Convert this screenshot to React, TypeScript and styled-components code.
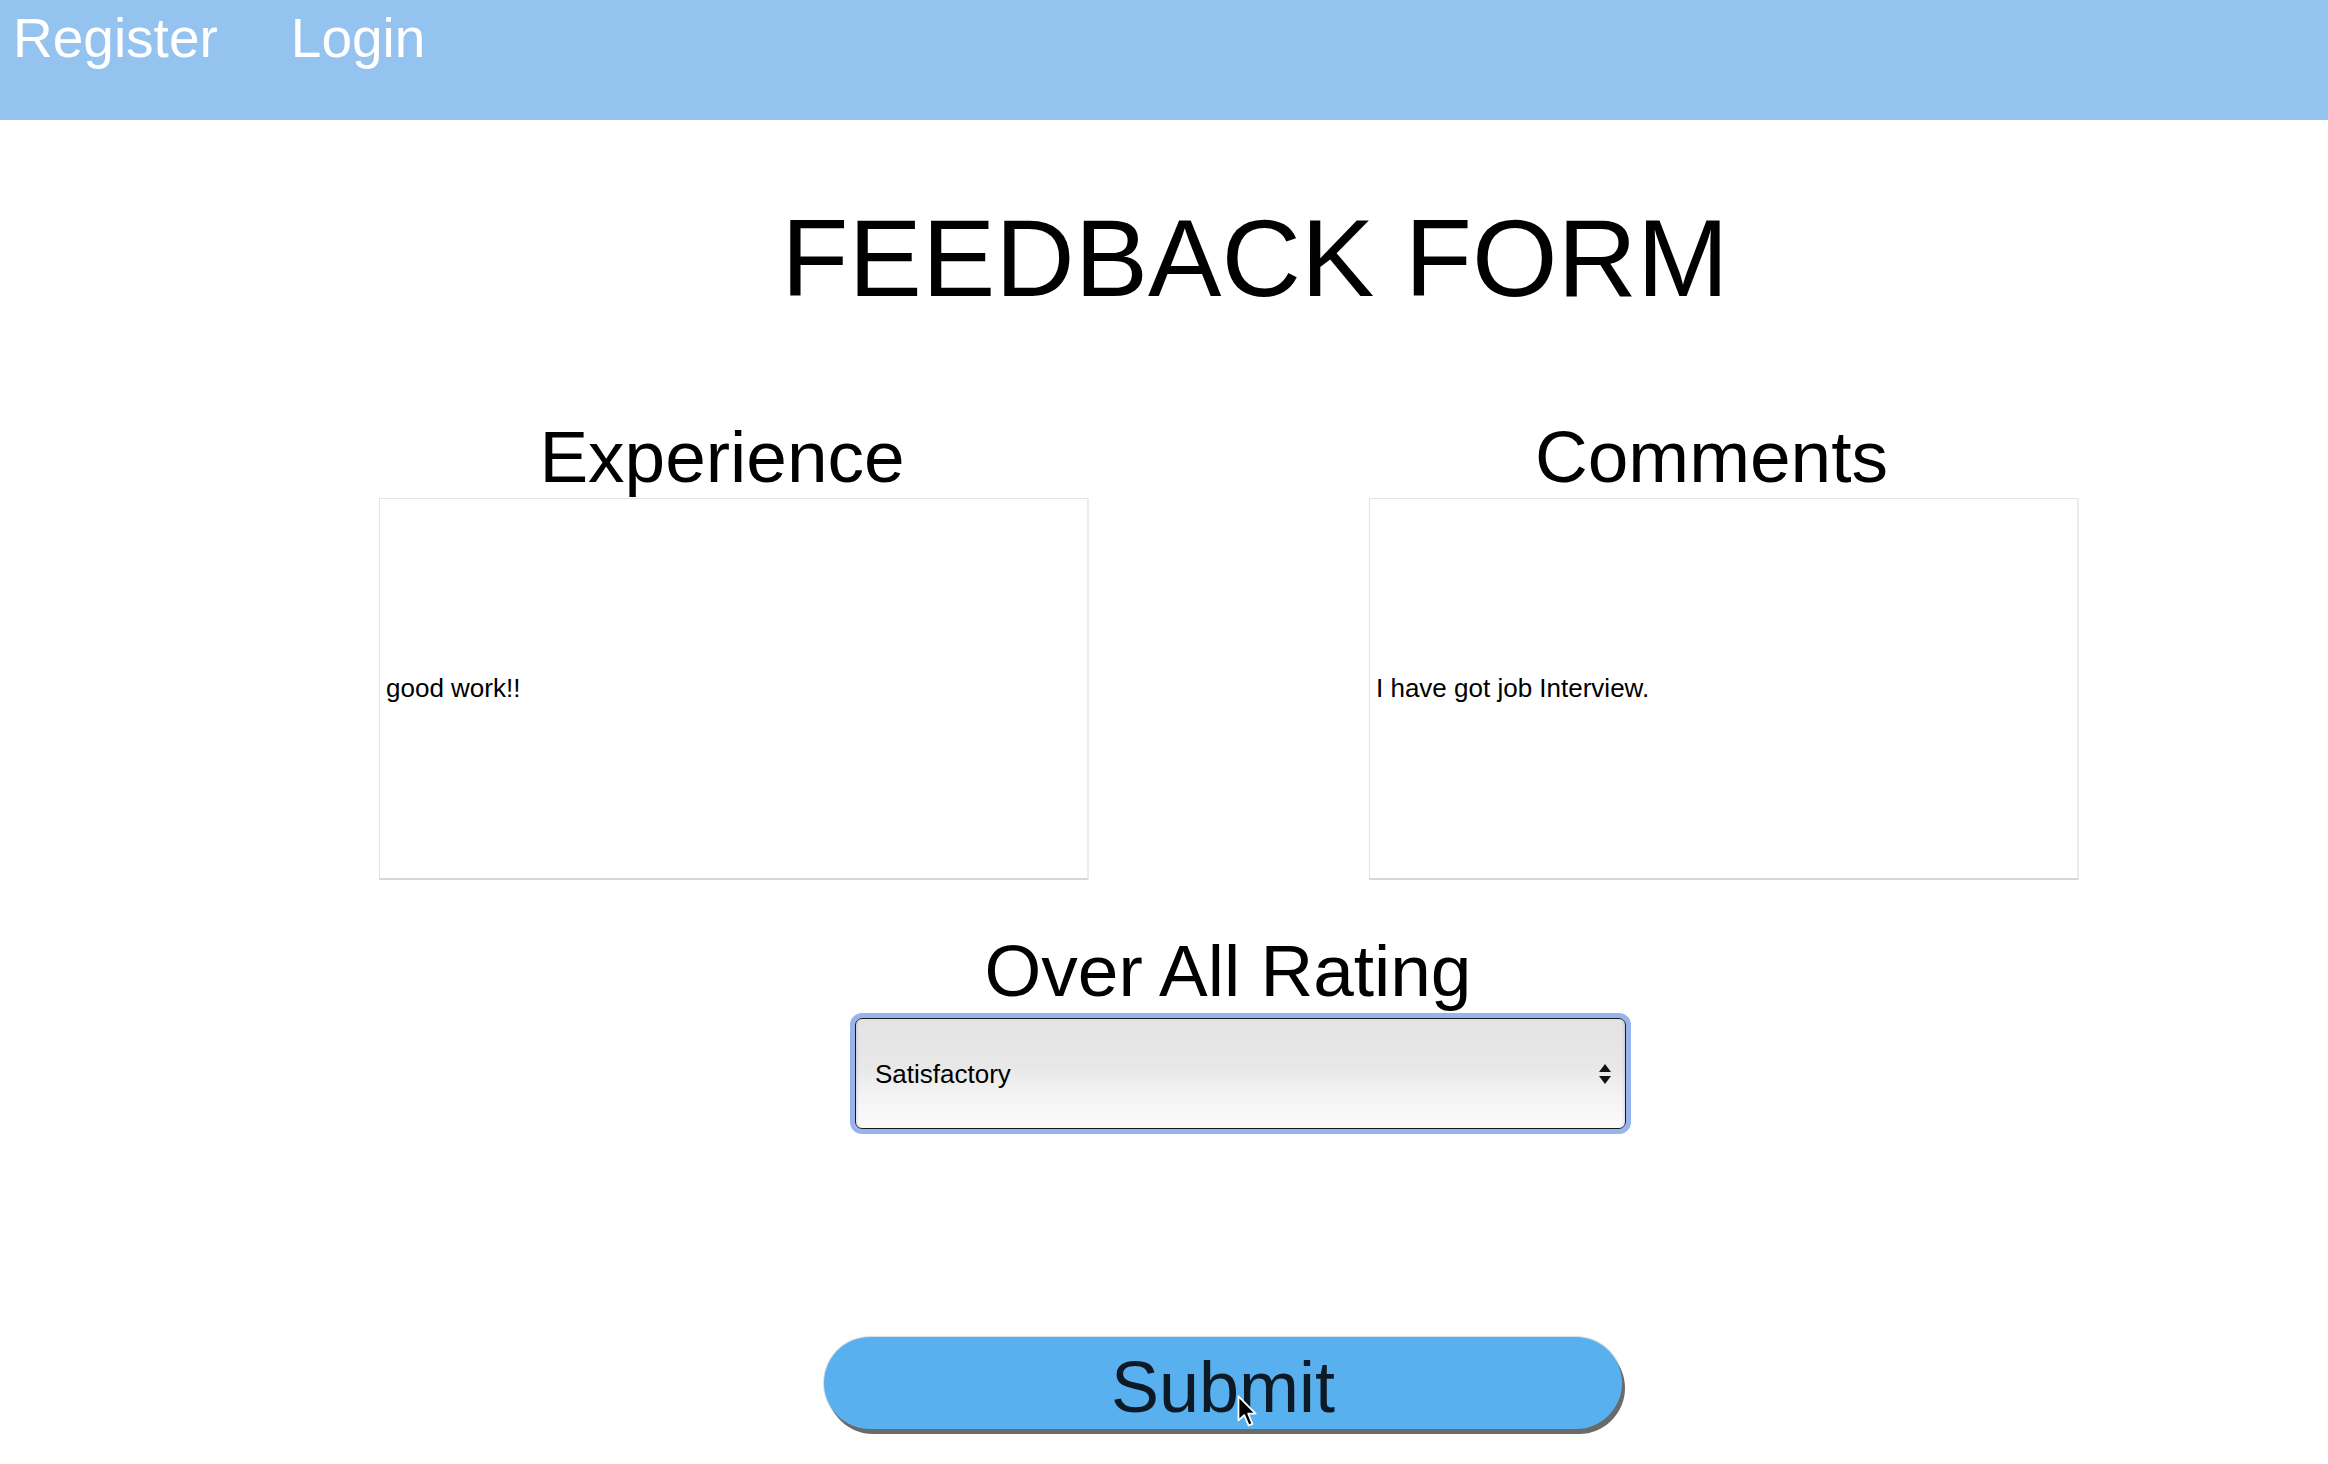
import React from "react";
import styled, { createGlobalStyle } from "styled-components";

const GlobalStyle = createGlobalStyle`
  html, body {
    margin: 0;
    padding: 0;
    background: #ffffff;
  }
  body {
    font-family: "Liberation Sans", Arial, Helvetica, sans-serif;
    color: #000;
  }
`;

const Nav = styled.nav`
  box-sizing: border-box;
  height: 120px;
  background: #95c3ef;
  display: flex;
  align-items: flex-start;
  gap: 73px;
  padding: 11px 0 0 13px;
`;

const NavLink = styled.a`
  color: #ffffff;
  font-size: 55px;
  line-height: 1;
  text-decoration: none;
`;

const Title = styled.h1`
  margin: 83px 0 0;
  padding-left: 182px;
  text-align: center;
  font-size: 110px;
  line-height: 1;
  font-weight: 400;
`;

const Columns = styled.div`
  display: grid;
  grid-template-columns: 710px 710px;
  column-gap: 280px;
  margin-top: 107px;
  padding-left: 379px;
`;

const Column = styled.div`
  display: flex;
  flex-direction: column;
  gap: 5px;
`;

const SectionHeading = styled.h2<{ $shift: number }>`
  margin: 0;
  padding-left: ${(p) => (p.$shift > 0 ? p.$shift : 0)}px;
  padding-right: ${(p) => (p.$shift < 0 ? -p.$shift : 0)}px;
  text-align: center;
  font-size: 73px;
  line-height: 1;
  font-weight: 400;
`;

const TextBox = styled.input`
  box-sizing: border-box;
  width: 100%;
  height: 382px;
  margin: 0;
  border: 1px solid #e4e4e4;
  border-right: 2px solid #ececec;
  border-bottom: 2px solid #d6d6d6;
  border-radius: 0;
  padding: 0 6px;
  background: #fff;
  font-family: inherit;
  font-size: 26px;
  color: #000;
  outline: none;
`;

const RatingSection = styled.div`
  margin-top: 54px;
`;

const SelectRow = styled.div`
  display: flex;
  justify-content: center;
  padding-left: 153px;
  margin-top: 11px;
`;

const SelectWrap = styled.div`
  position: relative;
  width: 771px;
  height: 111px;
`;

const RatingSelect = styled.select`
  appearance: none;
  -webkit-appearance: none;
  box-sizing: border-box;
  width: 100%;
  height: 100%;
  margin: 0;
  border: 1px solid #1a1a1a;
  border-radius: 7px;
  padding: 0 0 0 19px;
  background: linear-gradient(#e3e3e3 0%, #e8e8e8 45%, #f3f3f3 70%, #fbfbfb 100%);
  box-shadow: 0 0 0 5px #97b4ee, inset 3px 0 3px -2px rgba(0, 0, 0, 0.12),
    inset -3px 0 3px -2px rgba(0, 0, 0, 0.12);
  font-family: inherit;
  font-size: 26px;
  color: #000;
  outline: none;
`;

const Arrows = styled.svg`
  position: absolute;
  right: 15px;
  top: 50%;
  transform: translateY(-50%);
  pointer-events: none;
`;

const SubmitRow = styled.div`
  display: flex;
  justify-content: center;
  padding-left: 118px;
  margin-top: 208px;
  padding-bottom: 30px;
`;

const SubmitButton = styled.button`
  position: relative;
  box-sizing: border-box;
  width: 798px;
  height: 92px;
  border: none;
  border-radius: 46px;
  background: #59b0ee;
  box-shadow: 3px 5px 0 #6a6a6a, 0 0 0 1px rgba(160, 160, 160, 0.35);
  padding: 8px 0 0;
  display: flex;
  align-items: center;
  justify-content: center;
  font-family: inherit;
  font-size: 72px;
  line-height: 1;
  color: #0d1a26;
  cursor: pointer;
`;

const Cursor = styled.svg`
  position: absolute;
  left: 413px;
  top: 58px;
  pointer-events: none;
`;

export default function App() {
  return (
    <>
      <GlobalStyle />
      <Nav>
        <NavLink href="#register">Register</NavLink>
        <NavLink href="#login">Login</NavLink>
      </Nav>
      <Title>FEEDBACK FORM</Title>
      <Columns>
        <Column>
          <SectionHeading $shift={-24}>Experience</SectionHeading>
          <TextBox type="text" defaultValue="good work!!" />
        </Column>
        <Column>
          <SectionHeading $shift={-25}>Comments</SectionHeading>
          <TextBox type="text" defaultValue="I have got job Interview." />
        </Column>
      </Columns>
      <RatingSection>
        <SectionHeading $shift={128}>Over All Rating</SectionHeading>
        <SelectRow>
          <SelectWrap>
            <RatingSelect defaultValue="Satisfactory">
              <option>Excellent</option>
              <option>Good</option>
              <option>Satisfactory</option>
              <option>Poor</option>
            </RatingSelect>
            <Arrows width="12" height="20" viewBox="0 0 12 20">
              <polygon points="6,0 12,8 0,8" fill="#111" />
              <polygon points="0,12 12,12 6,20" fill="#111" />
            </Arrows>
          </SelectWrap>
        </SelectRow>
      </RatingSection>
      <SubmitRow>
        <SubmitButton type="button">
          Submit
          <Cursor width="22" height="33" viewBox="0 0 17 26">
            <path
              d="M1 1 L1 20 L5.5 15.8 L9 24 L12 22.7 L8.6 14.6 L14.5 14.6 Z"
              fill="#000"
              stroke="#fff"
              strokeWidth="1.4"
              strokeLinejoin="round"
            />
          </Cursor>
        </SubmitButton>
      </SubmitRow>
    </>
  );
}
